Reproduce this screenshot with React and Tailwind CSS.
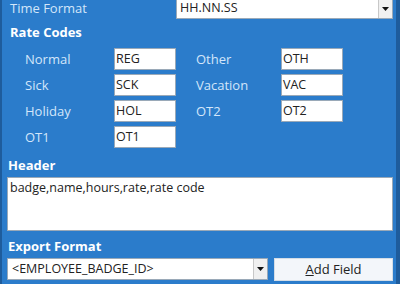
import React from 'react';

const font = { fontFamily: '"Open Sans", "Noto Sans", sans-serif' };

function Arrow() {
  return (
    <div className="w-[14px] h-full flex items-center justify-center bg-[#f0f0f0] border-l border-[#c8c8c8]">
      <svg width="7" height="4" viewBox="0 0 7 4">
        <path d="M0 0 L7 0 L3.5 4 Z" fill="#111" />
      </svg>
    </div>
  );
}

function CodeInput({ value }) {
  return (
    <div className="w-[62px] h-[22px] bg-white border border-[#9aa9b8] flex items-center pl-[1px] text-[12.5px] text-[#222] leading-none">
      {value}
    </div>
  );
}

function Label({ children }) {
  return <div className="text-[13px] text-[#d3e6fa] leading-none">{children}</div>;
}

export default function App() {
  const rows = [
    ['Normal', 'REG', 'Other', 'OTH'],
    ['Sick', 'SCK', 'Vacation', 'VAC'],
    ['Holiday', 'HOL', 'OT2', 'OT2'],
    ['OT1', 'OT1', null, null],
  ];
  return (
    <div className="w-[400px] h-[284px] bg-[#2b7ccb] flex overflow-hidden" style={font}>
      <div className="w-[2px] bg-[#1e5c9c]" />
      <div className="flex-1 flex flex-col pl-[5px] pr-[2px]">
        <div className="flex items-center h-[19px] -mt-[1px]">
          <div className="pl-[3px] w-[169px] text-[13px] text-[#d3e6fa] leading-none">Time Format</div>
          <div className="w-[217px] h-[20px] bg-white border border-[#9aa9b8] flex items-stretch">
            <div className="flex-1 flex items-center pl-[3px] text-[12.5px] text-[#222] leading-none">HH.NN.SS</div>
            <Arrow />
          </div>
        </div>
        <div className="mt-[4px] pl-[3px] h-[20px] flex items-center text-[13px] font-bold text-white leading-none">Rate Codes</div>
        <div className="mt-[6px] flex flex-col gap-[4px] pl-[18px]">
          {rows.map((r, i) => (
            <div key={i} className="flex items-center h-[22px]">
              <div className="w-[89px]"><Label>{r[0]}</Label></div>
              <CodeInput value={r[1]} />
              {r[2] && (
                <>
                  <div className="w-[102px] pl-[20px]"><Label>{r[2]}</Label></div>
                  <div className="ml-[3px]"><CodeInput value={r[3]} /></div>
                </>
              )}
            </div>
          ))}
        </div>
        <div className="mt-[7px] pl-[1px] h-[20px] flex items-center text-[13px] font-bold text-white leading-none">Header</div>
        <div className="mt-[2px] w-[386px] h-[54px] bg-white border border-[#9aa9b8] px-[2px] pt-[2px] text-[12.5px] text-[#222] leading-tight">
          badge,name,hours,rate,rate code
        </div>
        <div className="mt-[5px] pl-[1px] h-[20px] flex items-center text-[13px] font-bold text-white leading-none">Export Format</div>
        <div className="mt-[2px] flex gap-[6px]">
          <div className="w-[261px] h-[22px] bg-white border border-[#9aa9b8] flex items-stretch">
            <div className="flex-1 flex items-center pl-[4px] text-[12.5px] text-[#222] leading-none">&lt;EMPLOYEE_BADGE_ID&gt;</div>
            <Arrow />
          </div>
          <button className="w-[119px] h-[23px] bg-[#f3f6fa] border border-[#d4dde6] text-[13px] text-[#222] leading-none flex items-center justify-center">
            <span><span className="underline">A</span>dd Field</span>
          </button>
        </div>
      </div>
      <div className="w-[4px] bg-[#1e5c9c]" />
    </div>
  );
}
